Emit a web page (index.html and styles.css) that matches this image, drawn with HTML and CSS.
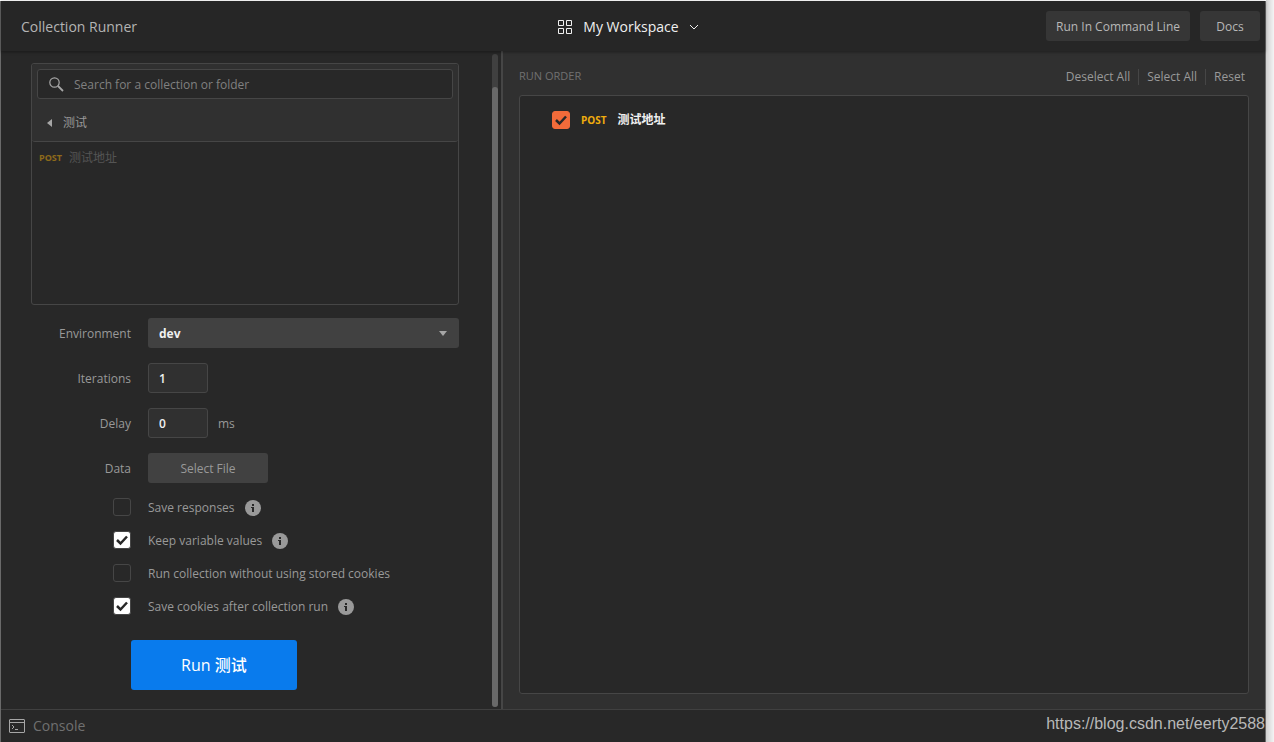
FILE: index.html
```html
<!DOCTYPE html>
<html lang="en">
<head>
    <meta charset="UTF-8">
    <meta name="viewport" content="width=device-width, initial-scale=1.0">
    <title>Collection Runner</title>
    <link rel="stylesheet" href="styles.css">
</head>
<body>
    <div class="window">
        <header class="header">
            <h1 class="header-title">Collection Runner</h1>
            <button class="workspace" type="button">
                <svg width="15" height="15" viewBox="0 0 15 15" fill="none" stroke="#f0f0f0">
                    <path d="M.5 .5h5v5h-5zM8.500 .5h5v5h-5zM.5 8.500h5v5h-5zM8.500 8.500h5v5h-5z"/>
                </svg>
                <span>My Workspace</span>
                <svg width="10" height="6" viewBox="0 0 10 6" fill="none" stroke="#f0f0f0">
                    <path d="M1 1l4 4 4-4"/>
                </svg>
            </button>
            <div class="header-actions">
                <button class="header-btn" type="button">Run In Command Line</button>
                <button class="header-btn" type="button">Docs</button>
            </div>
        </header>

        <main class="main">
            <section class="config">
                <form class="config-form">
                    <div class="picker">
                        <div class="picker-top">
                            <div class="search">
                                <svg width="15" height="15" viewBox="0 0 15 15" fill="none" stroke="#a6a6a6">
                                    <circle cx="5.500" cy="5.500" r="4.700" stroke-width="1.200"/>
                                    <path d="M9 9l5 5" stroke-width="1.800"/>
                                </svg>
                                <input class="search-input" type="text" placeholder="Search for a collection or folder" aria-label="Search for a collection or folder">
                            </div>
                            <button class="crumb" type="button">
                                <svg width="5" height="8" viewBox="0 0 5 8"><path d="M5 0v8L0 4z" fill="#a6a6a6"/></svg>
                                <span>测试</span>
                            </button>
                        </div>
                        <div class="picker-item">
                            <span class="method method-small">POST</span>
                            <span class="picker-name">测试地址</span>
                        </div>
                    </div>

                    <div class="fields">
                        <label class="field-label" for="environment">Environment</label>
                        <select class="env-select" id="environment">
                            <option>dev</option>
                        </select>

                        <label class="field-label" for="iterations">Iterations</label>
                        <div class="field-value">
                            <input class="number-input" id="iterations" type="text" value="1">
                        </div>

                        <label class="field-label" for="delay">Delay</label>
                        <div class="field-value">
                            <input class="number-input" id="delay" type="text" value="0">
                            <span class="field-unit">ms</span>
                        </div>

                        <label class="field-label" for="data">Data</label>
                        <div class="field-value">
                            <button class="file-btn" id="data" type="button">Select File</button>
                        </div>
                    </div>

                    <div class="options">
                        <div class="option">
                            <input class="checkbox" id="saveResponses" type="checkbox">
                            <label for="saveResponses">Save responses</label>
                            <svg class="info" viewBox="0 0 16 16"><circle cx="8" cy="8" r="8" fill="#999"/><path d="M7 4h2v2H7zM6 7h3v5H7V8H6z" fill="#282828"/></svg>
                        </div>
                        <div class="option">
                            <input class="checkbox" id="keepValues" type="checkbox" checked>
                            <label for="keepValues">Keep variable values</label>
                            <svg class="info" viewBox="0 0 16 16"><circle cx="8" cy="8" r="8" fill="#999"/><path d="M7 4h2v2H7zM6 7h3v5H7V8H6z" fill="#282828"/></svg>
                        </div>
                        <div class="option">
                            <input class="checkbox" id="noCookies" type="checkbox">
                            <label for="noCookies">Run collection without using stored cookies</label>
                        </div>
                        <div class="option">
                            <input class="checkbox" id="saveCookies" type="checkbox" checked>
                            <label for="saveCookies">Save cookies after collection run</label>
                            <svg class="info" viewBox="0 0 16 16"><circle cx="8" cy="8" r="8" fill="#999"/><path d="M7 4h2v2H7zM6 7h3v5H7V8H6z" fill="#282828"/></svg>
                        </div>
                    </div>

                    <button class="run-btn" type="button">Run 测试</button>
                </form>
                <div class="scrollbar">
                    <div class="scrollbar-thumb"></div>
                </div>
            </section>

            <section class="order">
                <div class="order-header">
                    <h2 class="order-title">RUN ORDER</h2>
                    <div class="order-actions">
                        <button class="link-btn" type="button">Deselect All</button>
                        <button class="link-btn" type="button">Select All</button>
                        <button class="link-btn" type="button">Reset</button>
                    </div>
                </div>
                <div class="order-list">
                    <label class="order-item">
                        <input class="checkbox checkbox-orange" type="checkbox" checked>
                        <span class="method">POST</span>
                        <span class="order-name">测试地址</span>
                    </label>
                </div>
            </section>
        </main>

        <footer class="footer">
            <button class="console-btn" type="button">
                <svg width="16" height="14" viewBox="0 0 16 14" fill="none" stroke="#a6a6a6">
                    <rect x=".5" y=".5" width="15" height="13" rx=".5"/>
                    <path d="M1 3.500h14M3 6l2 2-2 2M6 10.500h3"/>
                </svg>
                <span>Console</span>
            </button>
            <span class="watermark">https://blog.csdn.net/eerty2588</span>
        </footer>
    </div>
</body>
</html>
```
FILE: styles.css
```css
* {
    margin: 0;
    padding: 0;
    box-sizing: border-box;
}

body {
    display: flex;
    height: 100vh;
    padding: 1px 8px 0 0;
    background: linear-gradient(to left, #f4f4f4 0, #d0d0d0 8px, #fff 8px);
    font-family: "Open Sans", "Noto Sans CJK SC", sans-serif;
    font-size: 12px;
    line-height: 18px;
    color: #999;
}

button,
input,
select {
    border: none;
    background: none;
    font: inherit;
    color: inherit;
}

button {
    cursor: pointer;
}

svg {
    flex: none;
}

.window {
    flex: 1;
    min-width: 0;
    display: flex;
    flex-direction: column;
    border-left: 1px solid #6a6a6a;
    border-right: 1px solid #6a6a6a;
    background: #282828;
}

/* Header */
.header {
    display: grid;
    grid-template-columns: 1fr auto 1fr;
    align-items: center;
    height: 50px;
    padding: 0 5px 0 20px;
    background: #262626;
    box-shadow: 0 1px 3px rgba(0, 0, 0, 0.4);
    z-index: 1;
}

.header-title {
    padding-top: 2px;
    font-size: 14px;
    font-weight: 400;
    color: #b4b4b4;
}

.workspace {
    display: flex;
    align-items: center;
    gap: 10px;
    margin-right: 24px;
    padding-top: 2px;
    font-size: 14px;
    font-weight: 500;
    color: #f0f0f0;
}

.header-actions {
    display: flex;
    justify-content: flex-end;
    gap: 10px;
}

.header-btn {
    height: 30px;
    padding: 2px 10px 0;
    min-width: 60px;
    border-radius: 3px;
    background: #363636;
    color: #b8b8b8;
}

.main {
    flex: 1;
    min-height: 0;
    display: flex;
}

/* Left pane */
.config {
    flex: 0 1 502px;
    display: flex;
    border-right: 2px solid #464646;
}

.config-form {
    flex: 1;
    padding: 12px 33px 12px 30px;
}

.scrollbar {
    width: 6px;
    margin: 3px 3px 2px 0;
    padding-top: 33px;
    border-radius: 3px;
    background: #404040;
}

.scrollbar-thumb {
    height: 100%;
    border-radius: 3px;
    background: #696969;
}

.picker {
    height: 242px;
    border: 1px solid #464646;
    border-radius: 3px;
}

.picker-top {
    padding: 5px 5px 0;
    border-bottom: 1px solid #464646;
    border-radius: 3px;
    background: #303030;
}

.search {
    display: flex;
    align-items: center;
    gap: 10px;
    height: 30px;
    padding: 0 11px;
    border: 1px solid #464646;
    border-radius: 3px;
    background: #282828;
}

.search-input {
    flex: 1;
    min-width: 0;
    padding-top: 2px;
    outline: none;
}

.search-input::placeholder {
    color: #808080;
}

.crumb {
    display: flex;
    align-items: center;
    gap: 11px;
    height: 42px;
    padding: 6px 10px 0;
}

.picker-item {
    display: flex;
    align-items: center;
    gap: 7px;
    height: 32px;
    padding: 0 7px;
    opacity: 0.5;
}

.picker-name {
    color: #808080;
}

.method {
    font-size: 10px;
    font-weight: 700;
    color: #f0ad0e;
}

.method-small {
    font-size: 9px;
}

.fields {
    display: grid;
    grid-template-columns: 100px 1fr;
    gap: 15px 17px;
    align-items: center;
    margin-top: 13px;
}

.field-label,
.field-unit {
    padding-top: 2px;
    text-align: right;
}

.field-value {
    display: flex;
    align-items: center;
    gap: 10px;
}

.env-select {
    appearance: none;
    width: 100%;
    height: 30px;
    padding: 2px 11px 0;
    border-radius: 3px;
    background: #414141 url("data:image/svg+xml,%3Csvg xmlns='http://www.w3.org/2000/svg' width='8' height='5'%3E%3Cpath d='M0 0h8L4 5z' fill='%23a6a6a6'/%3E%3C/svg%3E") no-repeat right 12px center;
    font-weight: 700;
    color: #f0f0f0;
}

.number-input {
    width: 60px;
    height: 30px;
    padding: 0 10px;
    border: 1px solid #464646;
    border-radius: 3px;
    background: #303030;
    font-weight: 600;
    color: #f0f0f0;
}

.file-btn {
    width: 120px;
    height: 30px;
    padding-top: 2px;
    border-radius: 3px;
    background: #414141;
}

.options {
    display: flex;
    flex-direction: column;
    gap: 15px;
    margin: 15px 0 0 82px;
}

.option {
    display: flex;
    align-items: center;
    height: 18px;
}

.option label {
    margin-left: 17px;
    padding-top: 2px;
}

.info {
    width: 16px;
    height: 16px;
    margin: 2px 0 0 10px;
}

.checkbox {
    appearance: none;
    flex: none;
    width: 18px;
    height: 18px;
    border: 1px solid #464646;
    border-radius: 3px;
}

.checkbox:checked {
    background: #fff url("data:image/svg+xml,%3Csvg xmlns='http://www.w3.org/2000/svg' width='16' height='16'%3E%3Cpath d='M3 8l3.500 3.500L13 4.500' fill='none' stroke='%23282828' stroke-width='2.500'/%3E%3C/svg%3E") no-repeat center;
}

.checkbox-orange:checked {
    border-color: #f26b3a;
    background-color: #f26b3a;
}

.run-btn {
    display: block;
    height: 50px;
    margin: 25px 0 0 100px;
    padding: 0 50px;
    border-radius: 3px;
    background: #097bed;
    font-size: 16px;
    font-weight: 500;
    color: #fff;
}

/* Right pane */
.order {
    flex: 1;
    min-width: 0;
    display: flex;
    flex-direction: column;
    padding: 12px 16px 15px;
    background: #303030;
}

.order-header {
    display: flex;
    justify-content: space-between;
    align-items: flex-start;
    height: 32px;
    padding-top: 6px;
}

.order-title {
    font-size: 11px;
    font-weight: 500;
    line-height: 14px;
    color: #707070;
}

.order-actions {
    display: flex;
}

.link-btn {
    height: 16px;
    padding: 0 8px;
    line-height: 16px;
}

.link-btn + .link-btn {
    border-left: 1px solid #464646;
}

.link-btn:last-child {
    padding-right: 4px;
}

.order-list {
    flex: 1;
    padding: 15px 32px;
    border: 1px solid #464646;
    border-radius: 3px;
    background: #282828;
}

.order-item {
    display: flex;
    align-items: center;
    gap: 11px;
}

.order-name {
    font-weight: 600;
    color: #f0f0f0;
}

/* Footer */
.footer {
    display: flex;
    justify-content: space-between;
    align-items: center;
    height: 33px;
    padding-left: 8px;
    border-top: 1px solid #404040;
}

.console-btn {
    display: flex;
    align-items: center;
    gap: 8px;
    font-size: 14px;
    color: #707070;
}

.watermark {
    padding-bottom: 4px;
    font-family: "Liberation Sans", sans-serif;
    font-size: 16px;
    color: #b8b8b8;
}
```
